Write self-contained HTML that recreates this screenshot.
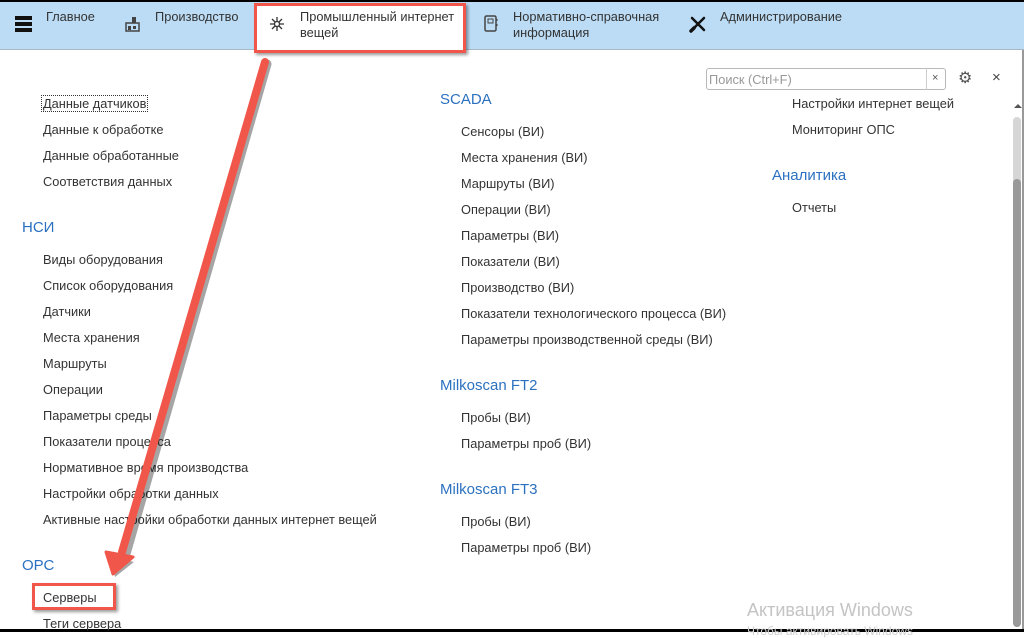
<!DOCTYPE html>
<html><head><meta charset="utf-8"><style>
*{margin:0;padding:0;box-sizing:border-box}
body{width:1024px;height:632px;overflow:hidden;background:#fff;font-family:"Liberation Sans",Arial,sans-serif;font-size:12.8px;color:#333;position:relative}
.top{position:absolute;left:0;top:0;width:1024px;height:2px;background:#000}
.nav{position:absolute;left:0;top:2px;width:1024px;height:48px;background:#bcdcf5;border-bottom:1px solid #a9b8c6}
.t{position:absolute;color:#333;font-size:12.8px;line-height:16px}
.h{position:absolute;color:#2b71c0;font-size:15px}
.l{position:absolute;font-size:12.8px;color:#333}
.sel{position:absolute;left:254px;top:3px;width:212px;height:50px;background:#fff;border:3px solid #f0574a;box-shadow:2px 2px 3px rgba(0,0,0,.4)}
</style></head><body>
<div class="top"></div>
<div class="nav"></div>
<div class="sel"></div>
<div style="position:absolute;left:15px;top:16px;width:17px;height:3.5px;background:#111"></div>
<div style="position:absolute;left:15px;top:22px;width:17px;height:3.5px;background:#111"></div>
<div style="position:absolute;left:15px;top:28px;width:17px;height:3.5px;background:#111"></div>
<div class="t" style="left:46px;top:9px">Главное</div>
<svg style="position:absolute;left:125px;top:16px" width="16" height="16" viewBox="0 0 16 16"><rect x="1" y="7" width="13" height="8" fill="none" stroke="#444" stroke-width="1.5"/><rect x="7" y="1" width="4" height="6" fill="#444"/><rect x="3" y="10" width="3" height="4" fill="#444"/><rect x="8" y="10" width="3" height="3" fill="#444"/></svg>
<div class="t" style="left:155px;top:9px">Производство</div>
<svg style="position:absolute;left:269px;top:16px" width="16" height="16" viewBox="0 0 16 16" stroke="#333" stroke-width="1.3"><path d="M8 1v14M1 8h14M3 3l10 10M13 3L3 13"/><circle cx="8" cy="8" r="2.5" fill="#fff"/></svg>
<div class="t" style="left:300px;top:9px">Промышленный интернет<br>вещей</div>
<svg style="position:absolute;left:484px;top:15px" width="14" height="17" viewBox="0 0 14 17"><rect x="1" y="1" width="11" height="15" rx="1.5" fill="none" stroke="#444" stroke-width="1.5"/><rect x="4" y="4" width="5" height="4" fill="none" stroke="#444"/><path d="M13 4v2M13 9v2" stroke="#444"/></svg>
<div class="t" style="left:513px;top:9px">Нормативно-справочная<br>информация</div>
<svg style="position:absolute;left:689px;top:15px" width="18" height="18" viewBox="0 0 18 18" stroke="#111" stroke-linecap="round"><path d="M3 3l12 12" stroke-width="2.5"/><path d="M15 3L4 14" stroke-width="2.5"/><path d="M2 16l3-3" stroke-width="3.5"/></svg>
<div class="t" style="left:720px;top:9px">Администрирование</div>
<div style="position:absolute;left:706px;top:68px;width:240px;height:22px;border:1px solid #b8b8b8;border-radius:3px"></div>
<div style="position:absolute;left:926px;top:68px;width:1px;height:22px;background:#ccc"></div>
<div style="position:absolute;left:709px;top:72px;color:#999;font-size:12.8px">Поиск (Ctrl+F)</div>
<div style="position:absolute;left:932px;top:72px;color:#555;font-size:11px">×</div>
<div style="position:absolute;left:958px;top:68px;color:#555;font-size:16px">⚙</div>
<div style="position:absolute;left:992px;top:69px;color:#444;font-size:15px">×</div>
<div style="position:absolute;left:1022px;top:50px;width:2px;height:580px;background:#999"></div>
<div style="position:absolute;left:1014px;top:104px;width:0;height:0;border-left:4px solid transparent;border-right:4px solid transparent;border-bottom:4px solid #555"></div>
<div style="position:absolute;left:1013px;top:117px;width:8px;height:510px;background:#d6d6d6;border-radius:4px"></div>
<div style="position:absolute;left:1013px;top:179px;width:8px;height:448px;background:#9a9a9a;border-radius:4px"></div>
<div style="position:absolute;left:0;top:629px;width:1024px;height:3px;background:#000"></div>
<div class="l" style="left:41px;top:95px;border:1px dotted #333;padding:0 1px">Данные датчиков</div>
<div class="l" style="left:43px;top:122px">Данные к обработке</div>
<div class="l" style="left:43px;top:148px">Данные обработанные</div>
<div class="l" style="left:43px;top:174px">Соответствия данных</div>
<div class="h" style="left:22px;top:219px">НСИ</div>
<div class="l" style="left:43px;top:252px">Виды оборудования</div>
<div class="l" style="left:43px;top:278px">Список оборудования</div>
<div class="l" style="left:43px;top:304px">Датчики</div>
<div class="l" style="left:43px;top:330px">Места хранения</div>
<div class="l" style="left:43px;top:356px">Маршруты</div>
<div class="l" style="left:43px;top:382px">Операции</div>
<div class="l" style="left:43px;top:408px">Параметры среды</div>
<div class="l" style="left:43px;top:434px">Показатели процесса</div>
<div class="l" style="left:43px;top:460px">Нормативное время производства</div>
<div class="l" style="left:43px;top:486px">Настройки обработки данных</div>
<div class="l" style="left:43px;top:512px">Активные настройки обработки данных интернет вещей</div>
<div class="h" style="left:22px;top:557px">ОРС</div>
<div style="position:absolute;left:32px;top:583px;width:84px;height:27px;border:3px solid #f0574a;box-shadow:2px 2px 3px rgba(0,0,0,.4)"></div>
<div class="l" style="left:43px;top:590px">Серверы</div>
<div class="l" style="left:43px;top:616px">Теги сервера</div>
<div class="h" style="left:440px;top:91px">SCADA</div>
<div class="l" style="left:461px;top:124px">Сенсоры (ВИ)</div>
<div class="l" style="left:461px;top:150px">Места хранения (ВИ)</div>
<div class="l" style="left:461px;top:176px">Маршруты (ВИ)</div>
<div class="l" style="left:461px;top:202px">Операции (ВИ)</div>
<div class="l" style="left:461px;top:228px">Параметры (ВИ)</div>
<div class="l" style="left:461px;top:254px">Показатели (ВИ)</div>
<div class="l" style="left:461px;top:280px">Производство (ВИ)</div>
<div class="l" style="left:461px;top:306px">Показатели технологического процесса (ВИ)</div>
<div class="l" style="left:461px;top:332px">Параметры производственной среды (ВИ)</div>
<div class="h" style="left:440px;top:377px">Milkoscan FT2</div>
<div class="l" style="left:461px;top:410px">Пробы (ВИ)</div>
<div class="l" style="left:461px;top:436px">Параметры проб (ВИ)</div>
<div class="h" style="left:440px;top:481px">Milkoscan FT3</div>
<div class="l" style="left:461px;top:514px">Пробы (ВИ)</div>
<div class="l" style="left:461px;top:540px">Параметры проб (ВИ)</div>
<div class="l" style="left:792px;top:96px">Настройки интернет вещей</div>
<div class="l" style="left:792px;top:122px">Мониторинг ОПС</div>
<div class="h" style="left:772px;top:167px">Аналитика</div>
<div class="l" style="left:792px;top:200px">Отчеты</div>
<div style="position:absolute;left:747px;top:600px;color:#c4c4c4;font-size:18px">Активация Windows</div>
<div style="position:absolute;left:747px;top:624px;color:#d0d0d0;font-size:12px">Чтобы активировать Windows</div>
<svg style="position:absolute;left:0;top:0" width="1024" height="632">
<g transform="translate(2,2)" opacity=".35"><path d="M265 62L124 552" stroke="#000" stroke-width="9" stroke-linecap="round"/><path d="M108 554L113 575L132 560Z" fill="#000"/></g>
<path d="M265 62L122 552" stroke="#f0574a" stroke-width="8" stroke-linecap="round"/>
<path d="M106 552L113 574L133 557Z" fill="#f0574a" stroke="#f0574a" stroke-width="3" stroke-linejoin="round"/>
</svg>
</body></html>
